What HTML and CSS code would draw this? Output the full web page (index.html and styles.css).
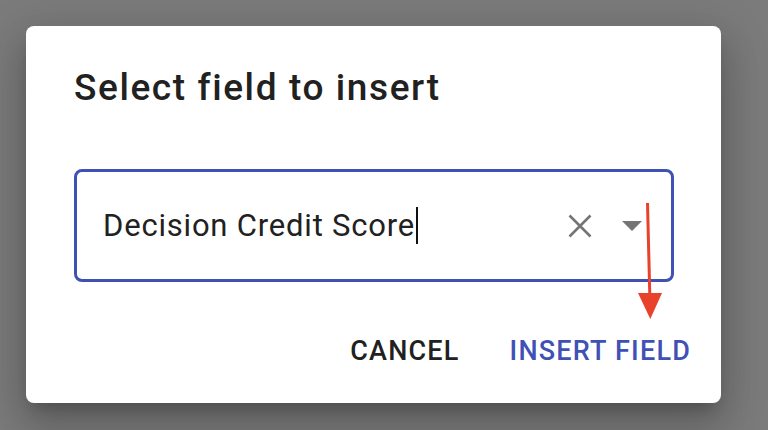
FILE: index.html
```html
<!DOCTYPE html>
<html>
<head>
<meta charset="utf-8">
<link rel="stylesheet" href="styles.css">
</head>
<body>
<div class="dialog">
  <h2 class="title">Select field to insert</h2>
  <div class="field">
    <span class="value">Decision Credit Score</span><span class="caret"></span>
    <span class="spacer"></span>
    <svg class="clear" width="24" height="24" viewBox="0 0 24 24"><path d="M1.5 1.5L22.5 22.5M22.5 1.5L1.5 22.5" stroke="#757575" stroke-width="2.6" fill="none"/></svg>
    <svg class="drop" width="20" height="10" viewBox="0 0 20 10"><path d="M0 0H20L10 10Z" fill="#757575"/></svg>
  </div>
  <div class="actions">
    <span class="btn cancel">CANCEL</span>
    <span class="btn insert">INSERT FIELD</span>
  </div>
  <svg class="arrow" width="30" height="120" viewBox="0 0 30 120"><path d="M12.5 0L14.8 92" stroke="#e8412c" stroke-width="3" fill="none"/><path d="M3 90H27L15.3 116Z" fill="#e8412c"/></svg>
</div>
</body>
</html>
```

FILE: styles.css
```css
html, body {
  margin: 0;
  padding: 0;
}
body {
  background: #7b7b7b;
  width: 768px;
  height: 430px;
  overflow: hidden;
  padding: 26px 0 0 26px;
  box-sizing: border-box;
  font-family: Roboto, "Liberation Sans", sans-serif;
}
.dialog {
  position: relative;
  width: 695px;
  height: 377px;
  box-sizing: border-box;
  background: #fff;
  border-radius: 8px;
  padding: 42px 47px 36px 48px;
  box-shadow: 0 11px 15px -7px rgba(0,0,0,.2), 0 24px 38px 3px rgba(0,0,0,.14), 0 9px 46px 8px rgba(0,0,0,.12);
  display: flex;
  flex-direction: column;
}
.title {
  margin: 0;
  font-size: 37px;
  line-height: 40px;
  font-weight: 500;
  color: #212121;
  letter-spacing: 1.6px;
  white-space: nowrap;
}
.field {
  margin-top: 61px;
  height: 113px;
  box-sizing: border-box;
  border: 3px solid #3f51b5;
  border-radius: 8px;
  display: flex;
  align-items: center;
  padding: 0 29px 0 26px;
}
.value {
  font-size: 31px;
  color: #212121;
  line-height: 36px;
  letter-spacing: 0.8px;
  white-space: nowrap;
}
.caret {
  display: inline-block;
  width: 2px;
  height: 37px;
  background: #111;
  margin-left: 1px;
}
.spacer {
  flex: 1;
}
.clear {
  margin-right: 30px;
}
.actions {
  margin-top: 53px;
  margin-right: -17px;
  display: flex;
  justify-content: flex-end;
  gap: 50px;
}
.btn {
  font-size: 27px;
  line-height: 32px;
  font-weight: 500;
  letter-spacing: 1.2px;
}
.cancel {
  color: #212121;
}
.insert {
  color: #3f51b5;
}
.arrow {
  position: absolute;
  left: 609px;
  top: 177px;
}
```
